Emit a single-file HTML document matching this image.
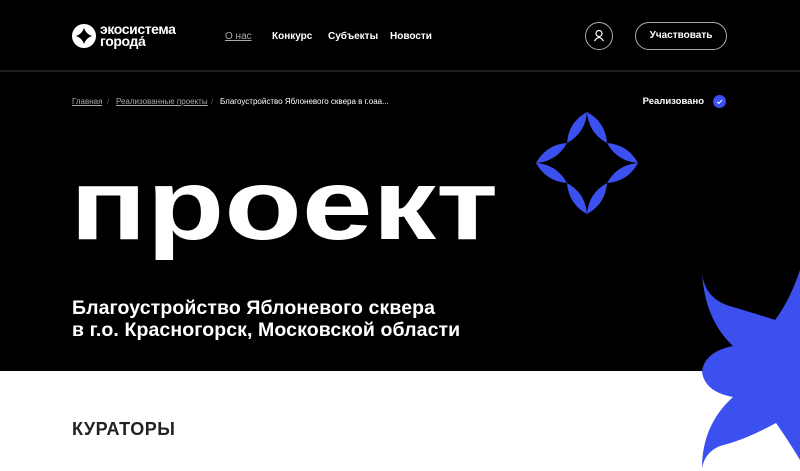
<!DOCTYPE html>
<html><head><meta charset="utf-8">
<style>
*{margin:0;padding:0;box-sizing:border-box}
body{width:800px;height:471px;overflow:hidden;background:#fff;font-family:"Liberation Sans",sans-serif;position:relative}
.top{position:absolute;left:0;top:0;width:800px;height:371px;background:#000}
.hl{position:absolute;left:0;top:70px;width:800px;height:2px;background:#1e1e1e}
.logo{position:absolute;left:72px;top:23px;color:#fff;font-weight:bold;font-size:14px;line-height:12px;letter-spacing:-0.4px}
.nav{position:absolute;top:31px;color:#fff;font-size:10px;font-weight:bold}
.user{position:absolute;left:585px;top:22px;width:28px;height:28px;border:1px solid #aaa;border-radius:50%}
.btn{position:absolute;left:635px;top:22px;width:92px;height:28px;border:1px solid #aaa;border-radius:14px;color:#fff;font-size:10px;font-weight:bold;text-align:center;line-height:26px}
.bc{position:absolute;top:97px;font-size:8px;color:#aaa}
.big{position:absolute;left:70px;top:135px;color:#fff;font-weight:bold;font-size:100px;letter-spacing:0;line-height:140px;transform:scaleX(1.27);transform-origin:0 0;white-space:nowrap}
.sub{position:absolute;left:72px;top:297px;color:#fff;font-weight:bold;font-size:19.5px;line-height:22px;letter-spacing:0.1px}
.cur{position:absolute;left:72px;top:419px;color:#222;font-weight:bold;font-size:18px;letter-spacing:0.5px}
</style></head><body>
<div class="top"></div>
<div class="hl"></div>
<svg style="position:absolute;left:72px;top:24px" width="24" height="24" viewBox="0 0 24 24"><path fill="#fff" fill-rule="evenodd" d="M12 0A12 12 0 1 0 12.01 0ZM12 4Q14 10 20 12Q14 14 12 20Q10 14 4 12Q10 10 12 4Z"/></svg>
<div class="logo" style="left:100px">экосистема<br>города́</div>
<div class="nav" style="left:225px;color:#aaa;text-decoration:underline;font-weight:normal">О нас</div>
<div class="nav" style="left:272px">Конкурс</div>
<div class="nav" style="left:328px">Субъекты</div>
<div class="nav" style="left:390px">Новости</div>
<div class="user"><svg width="26" height="26" viewBox="0 0 26 26"><circle cx="13" cy="10.5" r="3" fill="none" stroke="#fff" stroke-width="1.2"/><path d="M8.5 18Q13 11 17.5 18" fill="none" stroke="#fff" stroke-width="1.2"/></svg></div>
<div class="btn">Участвовать</div>
<div class="bc" style="left:72px;text-decoration:underline">Главная</div>
<div class="bc" style="left:107px;color:#555">/</div>
<div class="bc" style="left:116px;text-decoration:underline">Реализованные проекты</div>
<div class="bc" style="left:211px;color:#555">/</div>
<div class="bc" style="left:220px;color:#fff">Благоустройство Яблоневого сквера в г.оаа...</div>
<div style="position:absolute;left:600px;width:104px;text-align:right;top:96px;color:#fff;font-size:9.5px;font-weight:bold">Реализовано</div>
<svg style="position:absolute;left:713px;top:95px" width="13" height="13"><circle cx="6.5" cy="6.5" r="6.5" fill="#3c50f0"/><path d="M4 6.8L5.8 8.5L9 5" fill="none" stroke="#fff" stroke-width="1"/></svg>
<svg style="position:absolute;left:0;top:0" width="800" height="471">
<path fill="#3c50f0" fill-rule="evenodd" d="M587 112Q605.4 122 607 143Q627.9 144.6 638 163Q627.9 181.4 607 183Q605.4 204 587 214Q568.6 204 567 183Q546.1 181.4 536 163Q546.1 144.6 567 143Q568.6 122 587 112Z M587 112Q588.6 133 607 143Q617.1 161.4 638 163Q617.1 164.6 607 183Q588.6 193 587 214Q585.4 193 567 183Q556.9 164.6 536 163Q556.9 161.4 567 143Q585.4 133 587 112Z"/>
<path fill="#3c50f0" d="M702 273Q705 300 733 307Q760 315 775 320Q790 300 800 270L800 460Q788 440 776 423Q745 440 720 446Q705 452 702 468Q702 425 733 397Q705 392 702 372Q704 352 733 346Q705 320 702 273Z"/>
</svg>
<div class="big">проект</div>
<div class="sub">Благоустройство Яблоневого сквера<br>в г.о. Красногорск, Московской области</div>
<div class="cur">КУРАТОРЫ</div>
</body></html>
